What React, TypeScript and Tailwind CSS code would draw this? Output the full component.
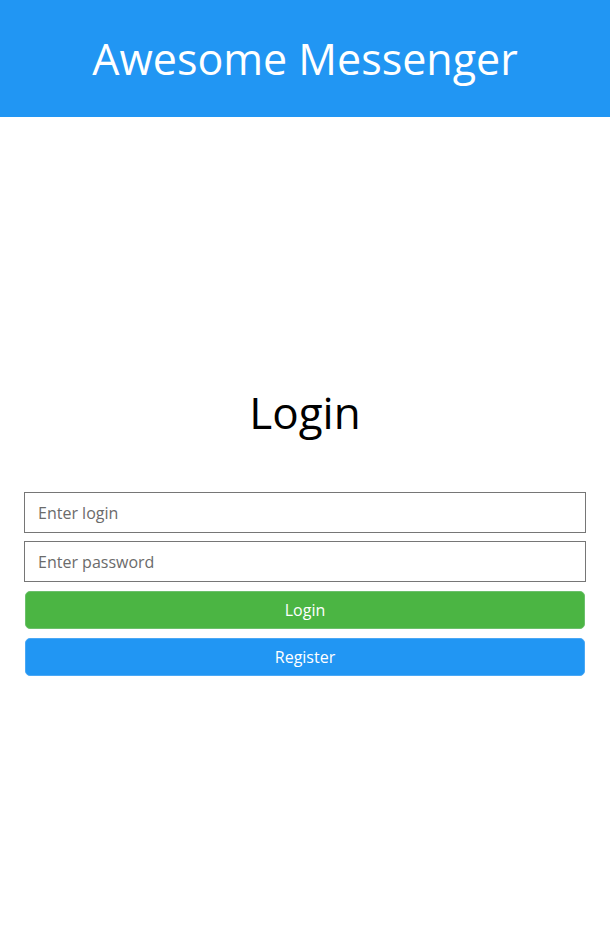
import React from "react";

export default function App() {
  return (
    <div className="min-h-[932px] w-full bg-white" style={{ fontFamily: '"Open Sans", "Noto Sans", sans-serif' }}>
      <header className="flex h-[117px] items-center justify-center bg-[#2196f3]">
        <h1 className="text-[43px] leading-none font-normal text-white">Awesome Messenger</h1>
      </header>
      <main className="flex flex-col px-[24px] pt-[265px]">
        <h2 className="text-center text-[44px] leading-[60px] font-normal text-black">Login</h2>
        <div className="mt-[50px] flex flex-col">
          <input
            className="h-[41px] w-full border border-[#767676] px-[13px] text-[16px] text-[#555] placeholder:text-[#6b6b6b] outline-none"
            placeholder="Enter login"
          />
          <input
            type="password"
            className="mt-[8px] h-[41px] w-full border border-[#767676] px-[13px] text-[16px] text-[#555] placeholder:text-[#6b6b6b] outline-none"
            placeholder="Enter password"
          />
          <button className="mx-[1px] mt-[9px] h-[38px] rounded-[5px] border border-[#6cc06c] bg-[#4bb543] text-[16px] text-white">
            Login
          </button>
          <button className="mx-[1px] mt-[9px] h-[38px] rounded-[5px] border border-[#4aa8f5] bg-[#2196f3] text-[16px] text-white">
            Register
          </button>
        </div>
      </main>
    </div>
  );
}
